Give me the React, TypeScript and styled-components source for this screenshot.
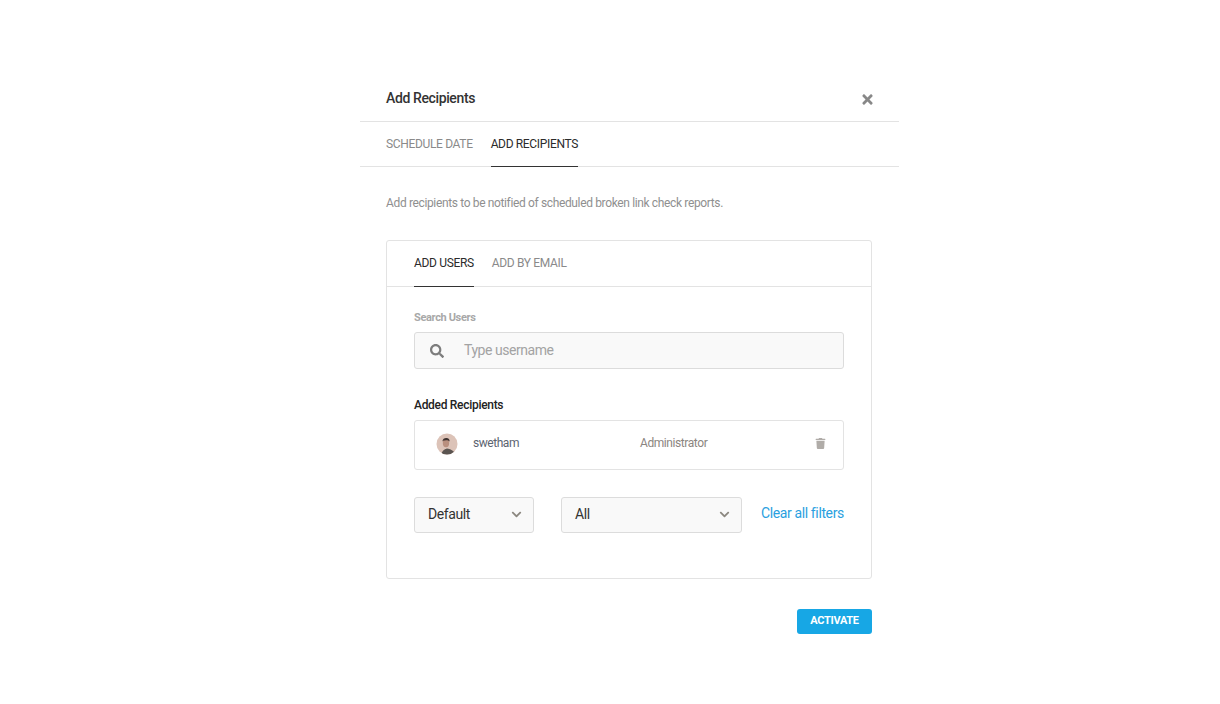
import React from 'react';
import styled, { createGlobalStyle } from 'styled-components';
import { FaTimes, FaSearch, FaTrash, FaChevronDown } from 'react-icons/fa';

const GlobalStyle = createGlobalStyle`
  html, body {
    margin: 0;
    padding: 0;
    background: #fff;
    font-family: Roboto, "Liberation Sans", sans-serif;
  }
`;

const Modal = styled.div`
  width: 539px;
  margin: 74px 0 0 360px;
`;

const Header = styled.div`
  height: 47px;
  padding: 0 25px 0 26px;
  display: flex;
  align-items: center;
  justify-content: space-between;
  border-bottom: 1px solid #e3e3e3;
`;

const Title = styled.h2`
  margin: 0;
  font-size: 14px;
  font-weight: 500;
  letter-spacing: -0.38px;
  color: #333;
`;

const CloseButton = styled.span`
  display: flex;
  margin: 3px -1px 0 0;
  color: #888;
  font-size: 15px;
`;

const TabBar = styled.div<{ $inset: number; $height: number }>`
  display: flex;
  gap: 18px;
  height: ${p => p.$height}px;
  padding-left: ${p => p.$inset}px;
  border-bottom: 1px solid #e3e3e3;
  box-sizing: border-box;
`;

const Tab = styled.div<{ $active?: boolean; $lift?: number }>`
  display: flex;
  align-items: center;
  padding-bottom: ${p => p.$lift || 0}px;
  font-size: 12px;
  letter-spacing: -0.34px;
  color: ${p => (p.$active ? '#2b2b2b' : '#8a8a8a')};
  border-bottom: 1px solid ${p => (p.$active ? '#333' : 'transparent')};
  margin-bottom: -1px;
`;

const Body = styled.div`
  padding: 0 27px 0 26px;
`;

const Description = styled.p`
  margin: 28px 0 29px;
  font-size: 12px;
  line-height: 16px;
  letter-spacing: -0.36px;
  color: #8f8f8f;
`;

const Card = styled.div`
  height: 339px;
  box-sizing: border-box;
  border: 1px solid #e3e3e3;
  border-radius: 3px;
`;

const CardBody = styled.div`
  padding: 24px 27px 0;
`;

const FieldLabel = styled.div`
  font-size: 11px;
  line-height: 13px;
  font-weight: 700;
  letter-spacing: -0.35px;
  color: #a8a8a8;
  margin-bottom: 8px;
`;

const SearchBox = styled.div`
  height: 37px;
  box-sizing: border-box;
  display: flex;
  align-items: center;
  gap: 20px;
  padding-left: 15px;
  background: #f9f9f9;
  border: 1px solid #dcdcdc;
  border-radius: 3px;
  color: #7d7d7d;
  font-size: 14px;
`;

const Placeholder = styled.span`
  padding-bottom: 2px;
  font-size: 14px;
  letter-spacing: -0.45px;
  color: #a3a3a3;
`;

const SectionLabel = styled.div`
  margin: 29px 0 8px;
  font-size: 12px;
  line-height: 14px;
  font-weight: 500;
  letter-spacing: -0.3px;
  color: #222;
`;

const RecipientRow = styled.div`
  height: 50px;
  box-sizing: border-box;
  display: flex;
  align-items: center;
  padding: 0 17px 4px 21px;
  border: 1px solid #e3e3e3;
  border-radius: 3px;
`;

const AvatarImage = styled.svg`
  flex: none;
  margin-top: 2px;
`;

const UserName = styled.span`
  width: 167px;
  margin-left: 15px;
  font-size: 12px;
  letter-spacing: -0.45px;
  color: #5c6470;
`;

const Role = styled.span`
  flex: 1;
  font-size: 12px;
  letter-spacing: -0.42px;
  color: #8b8580;
`;

const TrashIcon = styled.span`
  display: flex;
  color: #b0aca8;
  font-size: 11px;
`;

const Filters = styled.div`
  display: flex;
  align-items: flex-start;
  margin-top: 27px;
`;

const Select = styled.div<{ $width: number }>`
  flex: none;
  width: ${p => p.$width}px;
  height: 36px;
  box-sizing: border-box;
  display: flex;
  align-items: center;
  justify-content: space-between;
  margin-right: 27px;
  padding: 0 11px 2px 13px;
  background: #f9f9f9;
  border: 1px solid #dcdcdc;
  border-radius: 3px;
  font-size: 14px;
  letter-spacing: -0.4px;
  color: #333;
  svg {
    color: #8c8880;
    font-size: 11px;
  }
`;

const ClearLink = styled.a`
  flex: none;
  margin: 8px 0 0 -8px;
  font-size: 14px;
  line-height: 16px;
  letter-spacing: -0.38px;
  white-space: nowrap;
  color: #2a9fe0;
`;

const Footer = styled.div`
  display: flex;
  justify-content: flex-end;
  margin-top: 30px;
`;

const ActivateButton = styled.button`
  width: 75px;
  height: 25px;
  padding: 0 0 2px;
  border: 0;
  border-radius: 3px;
  background: #17a7e5;
  color: #fff;
  font-family: inherit;
  font-size: 11px;
  font-weight: 700;
  letter-spacing: -0.3px;
`;

const Avatar = () => (
  <AvatarImage width="22" height="22" viewBox="0 0 22 22">
    <defs>
      <clipPath id="avatar-clip">
        <circle cx="11" cy="11" r="10.5" />
      </clipPath>
    </defs>
    <g clipPath="url(#avatar-clip)">
      <rect width="22" height="22" fill="#dcc3b8" />
      <path d="M5 22c1-4 3-6 6-6.500 3 .5 7 2 9 6.500z" fill="#5a5450" />
      <ellipse cx="10" cy="10" rx="3.200" ry="4.200" fill="#b98f7e" />
      <path d="M6.400 8.400C6.600 5.400 9 4.600 11 5c2 .4 2.800 2 2.600 3.600-1-1.200-2.400-1.600-3.600-1.400-1.400.2-2.600.2-3.600 1.200z" fill="#3f3330" />
    </g>
  </AvatarImage>
);

const App: React.FC = () => (
  <>
    <GlobalStyle />
    <Modal>
      <Header>
        <Title>Add Recipients</Title>
        <CloseButton><FaTimes /></CloseButton>
      </Header>
      <TabBar $inset={26} $height={45}>
        <Tab>SCHEDULE DATE</Tab>
        <Tab $active>ADD RECIPIENTS</Tab>
      </TabBar>
      <Body>
        <Description>Add recipients to be notified of scheduled broken link check reports.</Description>
        <Card>
          <TabBar $inset={27} $height={46}>
            <Tab $active $lift={2}>ADD USERS</Tab>
            <Tab $lift={2}>ADD BY EMAIL</Tab>
          </TabBar>
          <CardBody>
            <FieldLabel>Search Users</FieldLabel>
            <SearchBox>
              <FaSearch />
              <Placeholder>Type username</Placeholder>
            </SearchBox>
            <SectionLabel>Added Recipients</SectionLabel>
            <RecipientRow>
              <Avatar />
              <UserName>swetham</UserName>
              <Role>Administrator</Role>
              <TrashIcon><FaTrash /></TrashIcon>
            </RecipientRow>
            <Filters>
              <Select $width={120}>Default <FaChevronDown /></Select>
              <Select $width={181}>All <FaChevronDown /></Select>
              <ClearLink>Clear all filters</ClearLink>
            </Filters>
          </CardBody>
        </Card>
        <Footer>
          <ActivateButton>ACTIVATE</ActivateButton>
        </Footer>
      </Body>
    </Modal>
  </>
);

export default App;
